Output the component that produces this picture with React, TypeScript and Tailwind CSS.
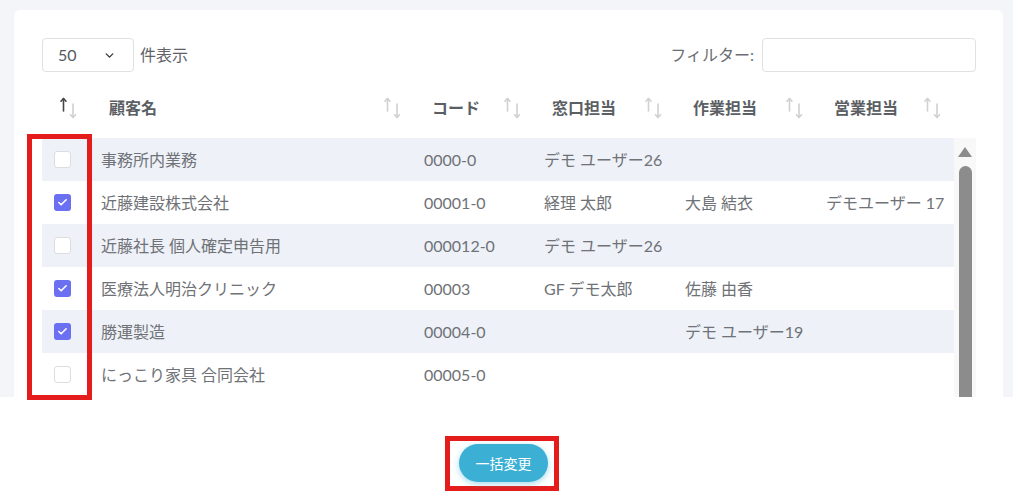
import React from 'react';
import { Check, ChevronDown } from 'lucide-react';

interface Row {
  checked: boolean;
  name: string;
  code: string;
  contact?: string;
  worker?: string;
  sales?: string;
}

const rows: Row[] = [
  { checked: false, name: '事務所内業務', code: '0000-0', contact: 'デモ ユーザー26' },
  { checked: true, name: '近藤建設株式会社', code: '00001-0', contact: '経理 太郎', worker: '大島 結衣', sales: 'デモユーザー 17' },
  { checked: false, name: '近藤社長 個人確定申告用', code: '000012-0', contact: 'デモ ユーザー26' },
  { checked: true, name: '医療法人明治クリニック', code: '00003', contact: 'GF デモ太郎', worker: '佐藤 由香' },
  { checked: true, name: '勝運製造', code: '00004-0', worker: 'デモ ユーザー19' },
  { checked: false, name: 'にっこり家具 合同会社', code: '00005-0' },
];

const cols = 'grid grid-cols-[49px_323px_120px_141px_141px_138px]';

function SortIcon({ active = false }: { active?: boolean }) {
  return (
    <svg width="18" height="22" viewBox="0 0 18 22" fill="none" strokeWidth="1.6" strokeLinecap="round" strokeLinejoin="round">
      <g stroke={active ? '#454545' : '#d0d0d0'}>
        <path d="M3.5 1.5 L3.5 14" />
        <path d="M1 4.2 L3.5 1.5 L6 4.2" />
      </g>
      <g stroke="#d0d0d0">
        <path d="M13 7 L13 20.5" />
        <path d="M10.5 17.8 L13 20.5 L15.5 17.8" />
      </g>
    </svg>
  );
}

function HeaderCell({ label }: { label: string }) {
  return (
    <div className="flex items-center justify-between pl-[18px] pr-[12px]">
      <span className="font-bold text-[#5b5f64]">{label}</span>
      <SortIcon />
    </div>
  );
}

function Checkbox({ checked }: { checked: boolean }) {
  if (checked) {
    return (
      <div className="w-[17px] h-[17px] rounded-[3px] bg-[#6b6ff1] flex items-center justify-center">
        <Check size={11} strokeWidth={3.5} color="#fff" />
      </div>
    );
  }
  return <div className="w-[17px] h-[17px] rounded-[3px] bg-white border border-[#dcdde0]" />;
}

export default function App() {
  return (
    <div
      className="relative w-[1013px] h-[498px] bg-white overflow-hidden text-[16px] text-[#6f7276]"
      style={{ fontFamily: "Lato, 'Noto Sans CJK JP', sans-serif" }}
    >
      {/* gray page area, clipped */}
      <div className="h-[397px] overflow-hidden bg-[#f4f5f8] pt-[10px] pl-[14px] pr-[10px]">
        <div className="h-full bg-white rounded-t-[6px] pt-[28px] pl-[28px] pr-[27px]">
          {/* controls */}
          <div className="flex items-center justify-between h-[34px]">
            <div className="flex items-center gap-[6px]">
              <div className="w-[92px] h-[34px] border border-[#dfe1e5] rounded-[4px] flex items-center justify-between pl-[15px] pr-[17px] text-[#555a60]">
                <span>50</span>
                <ChevronDown size={13} strokeWidth={2.6} color="#3a3a3a" />
              </div>
              <span className="text-[#5f6368]">件表示</span>
            </div>
            <div className="flex items-center gap-[8px]">
              <span className="text-[#6a6e72]">フィルター:</span>
              <div className="w-[214px] h-[34px] border border-[#dfe1e5] rounded-[4px]" />
            </div>
          </div>

          {/* header */}
          <div className={`${cols} w-[912px] h-[44px] mt-[14px]`}>
            <div className="flex items-center pl-[18px]">
              <SortIcon active />
            </div>
            <HeaderCell label="顧客名" />
            <HeaderCell label="コード" />
            <HeaderCell label="窓口担当" />
            <HeaderCell label="作業担当" />
            <HeaderCell label="営業担当" />
          </div>

          {/* body */}
          <div className="flex mt-[8px]">
            <div className="w-[912px]">
              {rows.map((r, i) => (
                <div key={i} className={`${cols} h-[43px] ${i % 2 === 0 ? 'bg-[#eef1f8]' : 'bg-white'}`}>
                  <div className="flex items-center pl-[12px]">
                    <Checkbox checked={r.checked} />
                  </div>
                  <div className="flex items-center pl-[10px]">{r.name}</div>
                  <div className="flex items-center pl-[10px]">{r.code}</div>
                  <div className="flex items-center pl-[10px]">{r.contact}</div>
                  <div className="flex items-center pl-[10px]">{r.worker}</div>
                  <div className="flex items-center pl-[10px]">{r.sales}</div>
                </div>
              ))}
            </div>
            {/* scrollbar */}
            <div className="w-[22px] h-[270px] bg-[#f8f8f9] flex flex-col items-center pt-[9px]">
              <div className="w-0 h-0 border-l-[7px] border-r-[7px] border-b-[10px] border-l-transparent border-r-transparent border-b-[#8c8c8c]" />
              <div className="w-[13px] flex-1 mt-[9px] bg-[#8c8c8c] rounded-t-[7px]" />
            </div>
          </div>
        </div>
      </div>

      {/* annotation around checkboxes */}
      <div className="absolute left-[27px] top-[134px] w-[65px] h-[266px] border-[5px] border-[#e41c1c]" />

      {/* action */}
      <div className="pt-[39px] pl-[445px]">
        <div className="inline-block border-[5px] border-[#e41c1c] pt-[3px] pr-[6px] pb-[4px] pl-[9px]">
          <button className="w-[89px] h-[38px] rounded-full bg-[#3bafd4] text-white text-[14px] shadow-[0_2px_6px_rgba(59,175,212,0.45)]">
            一括変更
          </button>
        </div>
      </div>
    </div>
  );
}
